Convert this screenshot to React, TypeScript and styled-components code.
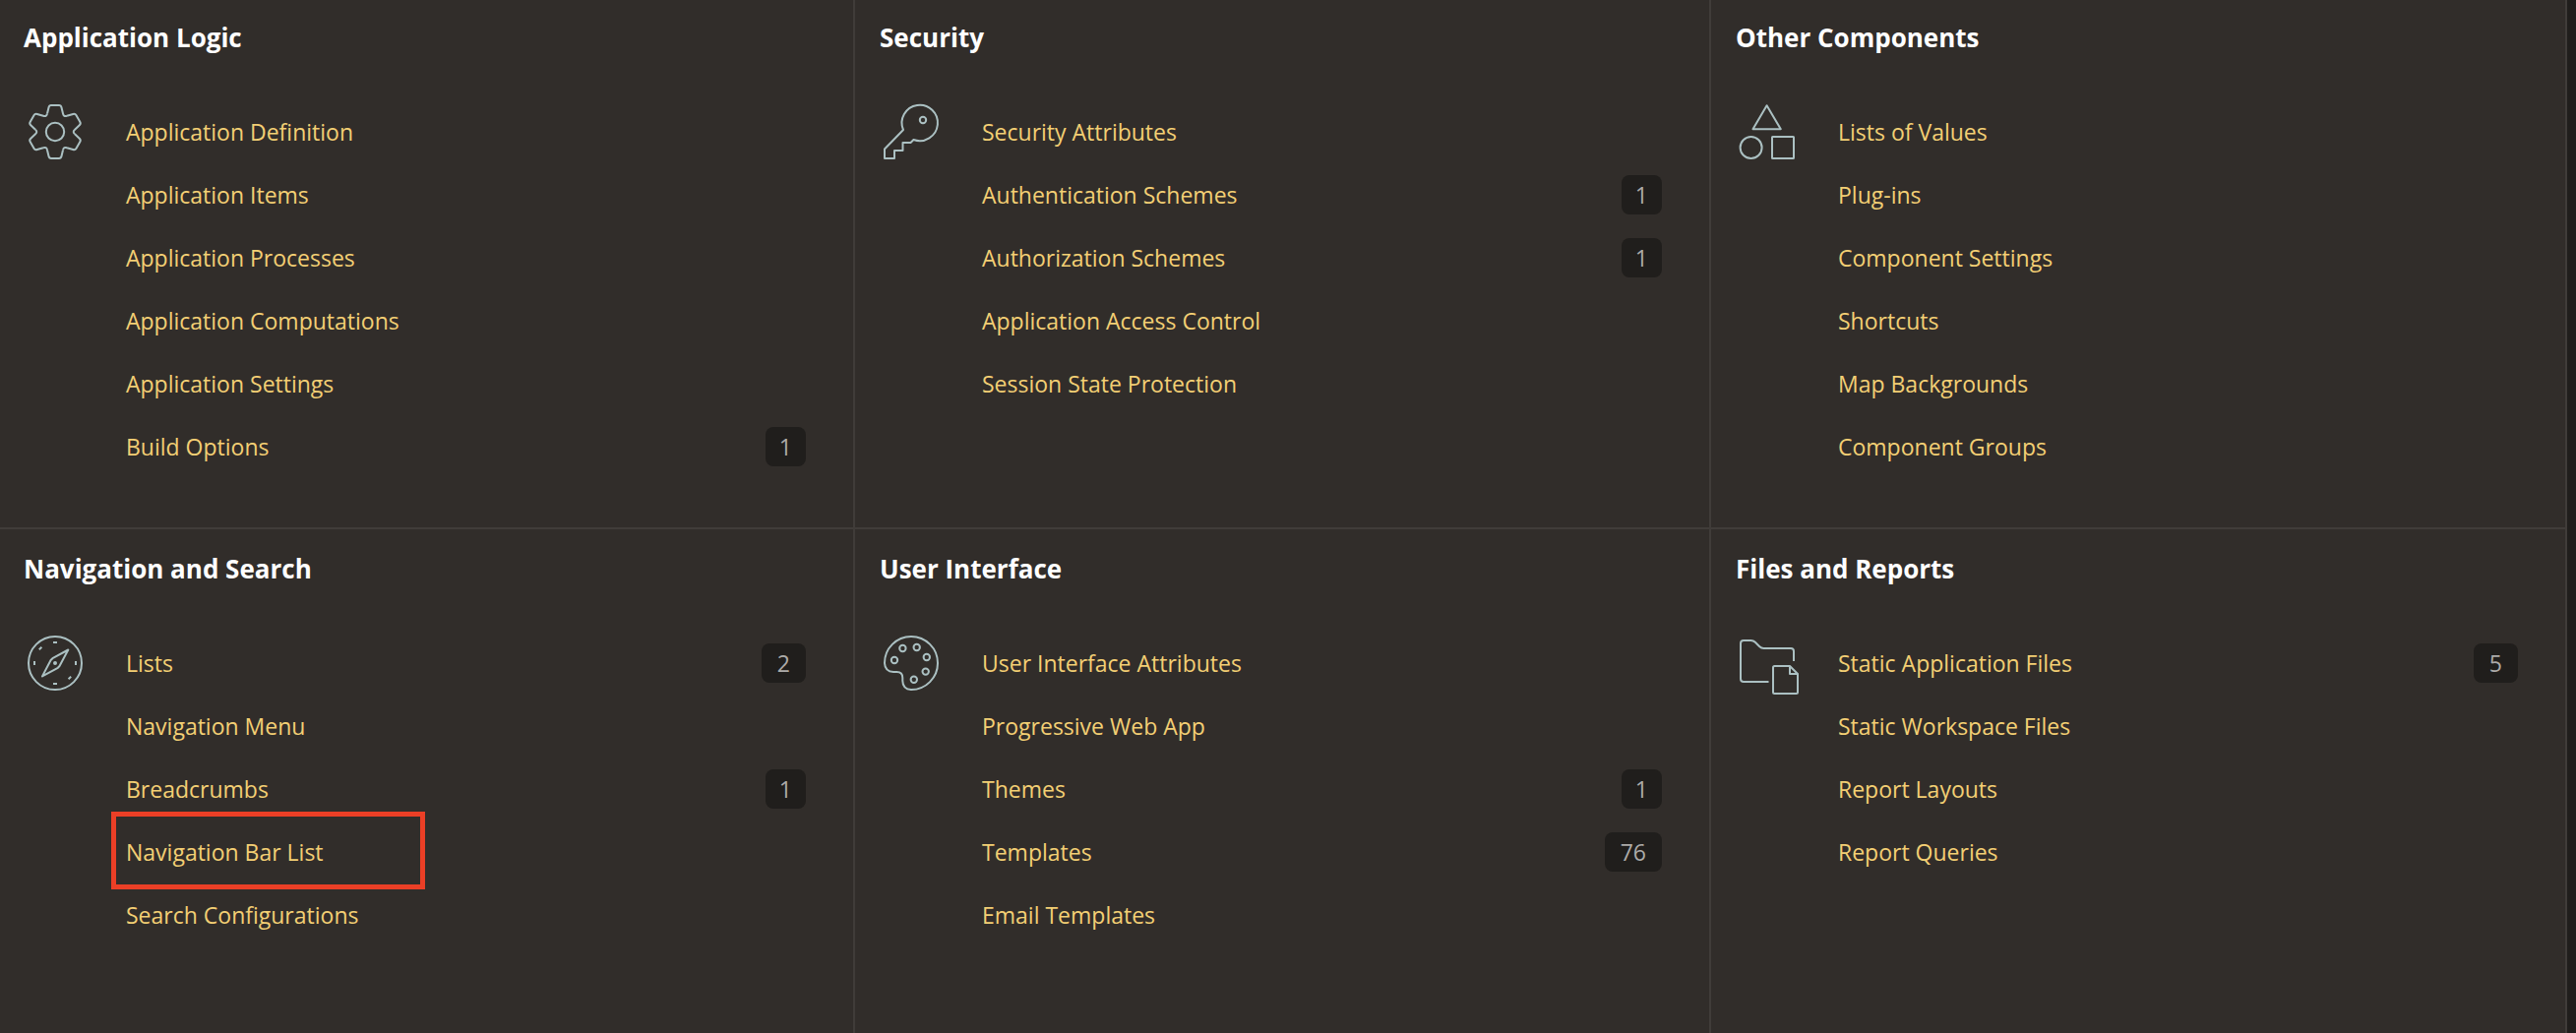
import React from "react";
import styled, { createGlobalStyle } from "styled-components";

const color = {
  page: "#201e1c",
  panel: "#312d2a",
  rule: "#403c39",
  heading: "#ffffff",
  link: "#f3cf74",
  icon: "#abc0c2",
  badge: "#201e1c",
  badgeText: "#adaba9",
  mark: "#eb3f26",
};

const GlobalStyle = createGlobalStyle`
  *, *::before, *::after { box-sizing: border-box; }
  body {
    margin: 0;
    background: ${color.page};
    font-family: "Open Sans", "Noto Sans", sans-serif;
    overflow: hidden;
  }
`;

const Grid = styled.main`
  display: grid;
  grid-template-columns: repeat(3, minmax(0, 1fr));
  grid-template-rows: auto 1fr;
  min-height: calc(100vh + 2px);
  margin: -2px 9px 0 -1px;
  background: ${color.panel};
`;

const Section = styled.section<{ $ruled: boolean }>`
  padding: 20px 48px 50px 25px;
  border-right: 2px solid ${color.rule};
  border-bottom: ${(p) => (p.$ruled ? `2px solid ${color.rule}` : "none")};
`;

const Heading = styled.h2`
  margin: 0 0 44px;
  color: ${color.heading};
  font-size: 26px;
  line-height: 40px;
  font-weight: 700;
`;

const Body = styled.div`
  display: flex;
  align-items: flex-start;
  gap: 40px;
`;

const Icon = styled.svg`
  flex: none;
  width: 64px;
  height: 64px;
  overflow: visible;
  fill: none;
  stroke: ${color.icon};
  stroke-width: 2;
  stroke-linejoin: round;
`;

const List = styled.ul`
  flex: 1;
  min-width: 0;
  margin: 0;
  padding: 0;
  list-style: none;
`;

const Row = styled.li`
  position: relative;
  display: flex;
  align-items: center;
  justify-content: space-between;
  height: 64px;
`;

const Link = styled.a`
  color: ${color.link};
  font-size: 23px;
  line-height: 40px;
  text-decoration: none;
  white-space: nowrap;

  &:hover { text-decoration: underline; }
`;

const Badge = styled.span<{ $slim: boolean }>`
  padding: 0 ${(p) => (p.$slim ? 14 : 16)}px;
  border-radius: 8px;
  background: ${color.badge};
  color: ${color.badgeText};
  font-size: 23px;
  line-height: 40px;
`;

const Mark = styled.span`
  position: absolute;
  top: -9px;
  bottom: -6px;
  left: -15px;
  width: 319px;
  border: 5px solid ${color.mark};
  pointer-events: none;
`;

const GearIcon = () => (
  <Icon viewBox="0 0 64 64" aria-hidden="true">
    <g transform="translate(32 32)">
      {[0, 60, 120, 180, 240, 300].map((a) => (
        <path
          key={a}
          transform={`rotate(${a})`}
          d="M-8 -18.5L-6.5 -24.8Q-6 -27 -4 -27H4Q6 -27 6.5 -24.8L8 -18.5Q8.7 -15.1 12 -16.2"
        />
      ))}
      <circle r="9.2" />
    </g>
  </Icon>
);

const KeyIcon = () => (
  <Icon viewBox="0 0 64 64" aria-hidden="true">
    <path d="M24 30L5 49.5V59H15V51H23.5V43H31.5L34.5 40A18.2 18.2 0 1 0 24 30Z" />
    <circle cx="44" cy="20" r="3.2" />
  </Icon>
);

const ShapesIcon = () => (
  <Icon viewBox="0 0 64 64" aria-hidden="true">
    <path d="M31.6 5.2L45.8 29.2H17.5Z" />
    <circle cx="15.6" cy="48" r="11" />
    <rect x="37" y="37" width="22" height="22" rx="0.5" />
  </Icon>
);

const CompassIcon = () => (
  <Icon viewBox="0 0 64 64" aria-hidden="true">
    <circle cx="32" cy="32" r="27" />
    <path d="M45.3 18.5L36.5 35L34.8 36.8L19 45.4L27.6 29L29.4 27.2Z" />
    <path d="M30 11h4M30 53h4M11 30v4M53 30v4M15.8 18.2l2.6-2.4M45.6 48.2l2.6-2.4" />
    <circle cx="32" cy="32" r="1" />
  </Icon>
);

const PaletteIcon = () => (
  <Icon viewBox="0 0 64 64" aria-hidden="true">
    <path d="M5 32A27 27 0 1 1 32 59Q23.5 58.6 23.3 50V47Q23.3 41 17.5 41H14Q5.4 40.6 5 32Z" />
    <circle cx="15" cy="29" r="3.2" />
    <circle cx="23.4" cy="17" r="3.2" />
    <circle cx="37.7" cy="16" r="3.2" />
    <circle cx="47.8" cy="26" r="3.2" />
    <circle cx="46.7" cy="40.6" r="3.2" />
    <circle cx="34.8" cy="48.7" r="3.2" />
  </Icon>
);

const FolderIcon = () => (
  <Icon viewBox="0 0 64 64" aria-hidden="true">
    <path d="M33.5 51H8Q5 51 5 48V12Q5 9 8 9H15.5Q18 9 19.8 10.8L24 15Q26 17 28.5 17H56Q59 17 59 20V30" />
    <path d="M39.5 35H55L63 43V61.5Q63 63 61.5 63H39.5Q38 63 38 61.5V36.5Q38 35 39.5 35ZM55 35V43H63" />
  </Icon>
);

type Item = { label: string; count?: number; marked?: boolean };
type Group = { title: string; icon: React.ReactNode; items: Item[] };

const groups: Group[] = [
  {
    title: "Application Logic",
    icon: <GearIcon />,
    items: [
      { label: "Application Definition" },
      { label: "Application Items" },
      { label: "Application Processes" },
      { label: "Application Computations" },
      { label: "Application Settings" },
      { label: "Build Options", count: 1 },
    ],
  },
  {
    title: "Security",
    icon: <KeyIcon />,
    items: [
      { label: "Security Attributes" },
      { label: "Authentication Schemes", count: 1 },
      { label: "Authorization Schemes", count: 1 },
      { label: "Application Access Control" },
      { label: "Session State Protection" },
    ],
  },
  {
    title: "Other Components",
    icon: <ShapesIcon />,
    items: [
      { label: "Lists of Values" },
      { label: "Plug-ins" },
      { label: "Component Settings" },
      { label: "Shortcuts" },
      { label: "Map Backgrounds" },
      { label: "Component Groups" },
    ],
  },
  {
    title: "Navigation and Search",
    icon: <CompassIcon />,
    items: [
      { label: "Lists", count: 2 },
      { label: "Navigation Menu" },
      { label: "Breadcrumbs", count: 1 },
      { label: "Navigation Bar List", marked: true },
      { label: "Search Configurations" },
    ],
  },
  {
    title: "User Interface",
    icon: <PaletteIcon />,
    items: [
      { label: "User Interface Attributes" },
      { label: "Progressive Web App" },
      { label: "Themes", count: 1 },
      { label: "Templates", count: 76 },
      { label: "Email Templates" },
    ],
  },
  {
    title: "Files and Reports",
    icon: <FolderIcon />,
    items: [
      { label: "Static Application Files", count: 5 },
      { label: "Static Workspace Files" },
      { label: "Report Layouts" },
      { label: "Report Queries" },
    ],
  },
];

export default function App() {
  return (
    <>
      <GlobalStyle />
      <Grid>
        {groups.map((group, i) => (
          <Section key={group.title} $ruled={i < 3}>
            <Heading>{group.title}</Heading>
            <Body>
              {group.icon}
              <List>
                {group.items.map((item) => (
                  <Row key={item.label}>
                    <Link href="#">{item.label}</Link>
                    {item.count !== undefined && (
                      <Badge $slim={item.count === 1}>{item.count}</Badge>
                    )}
                    {item.marked && <Mark />}
                  </Row>
                ))}
              </List>
            </Body>
          </Section>
        ))}
      </Grid>
    </>
  );
}
